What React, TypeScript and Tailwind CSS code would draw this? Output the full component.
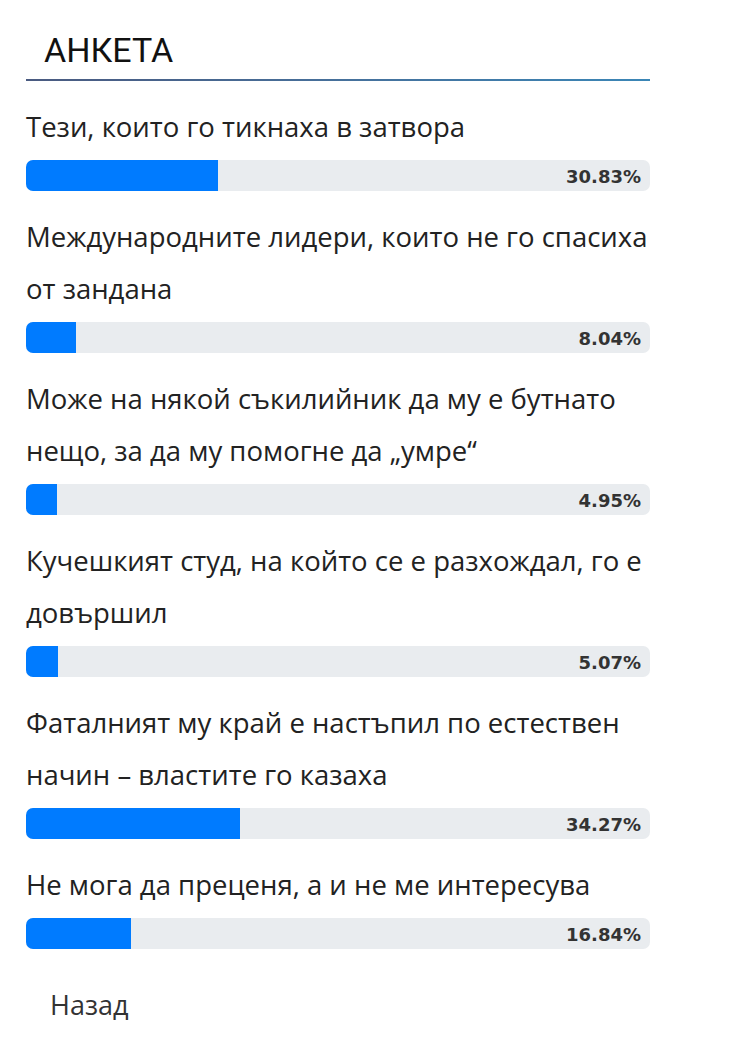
import React from 'react';

const answers = [
  { text: 'Тези, които го тикнаха в затвора', pct: 30.83 },
  { text: 'Международните лидери, които не го спасиха от зандана', pct: 8.04 },
  { text: 'Може на някой съкилийник да му е бутнато нещо, за да му помогне да „умре“', pct: 4.95 },
  { text: 'Кучешкият студ, на който се е разхождал, го е довършил', pct: 5.07 },
  { text: 'Фаталният му край е настъпил по естествен начин – властите го казаха', pct: 34.27 },
  { text: 'Не мога да преценя, а и не ме интересува', pct: 16.84 },
];

const Poll = () => {
  return (
    <div className="min-h-[1061px] bg-white font-['Open_Sans',sans-serif] text-[#222]">
      <div className="w-[624px] ml-[26px] pt-[28px]">
        <h2 className="pl-[18px] font-['Roboto',sans-serif] text-[34px] leading-[44px] font-normal text-[#111]">АНКЕТА</h2>
        <div className="h-[2px] mt-[7px] bg-gradient-to-r from-[#4a5a80] to-[#3a86b6]" />

        <div className="mt-[20px] flex flex-col gap-[20px]">
          {answers.map((a) => (
            <div key={a.text}>
              <p className="text-[27.5px] leading-[52px]">{a.text}</p>
              <div className="mt-[7px] h-[31px] rounded-[7px] bg-[#e9ecef] overflow-hidden relative">
                <div className="h-full bg-[#007bff]" style={{ width: `${a.pct}%` }} />
                <span className="absolute right-[9px] top-[1px] leading-[31px] font-['DejaVu_Sans',sans-serif] text-[18px] font-bold text-[#333]">
                  {a.pct.toFixed(2)}%
                </span>
              </div>
            </div>
          ))}
        </div>

        <div className="mt-[36px] pl-[24px] text-[27px] text-[#333]">Назад</div>
      </div>
    </div>
  );
};

export default function App() {
  return <Poll />;
}
